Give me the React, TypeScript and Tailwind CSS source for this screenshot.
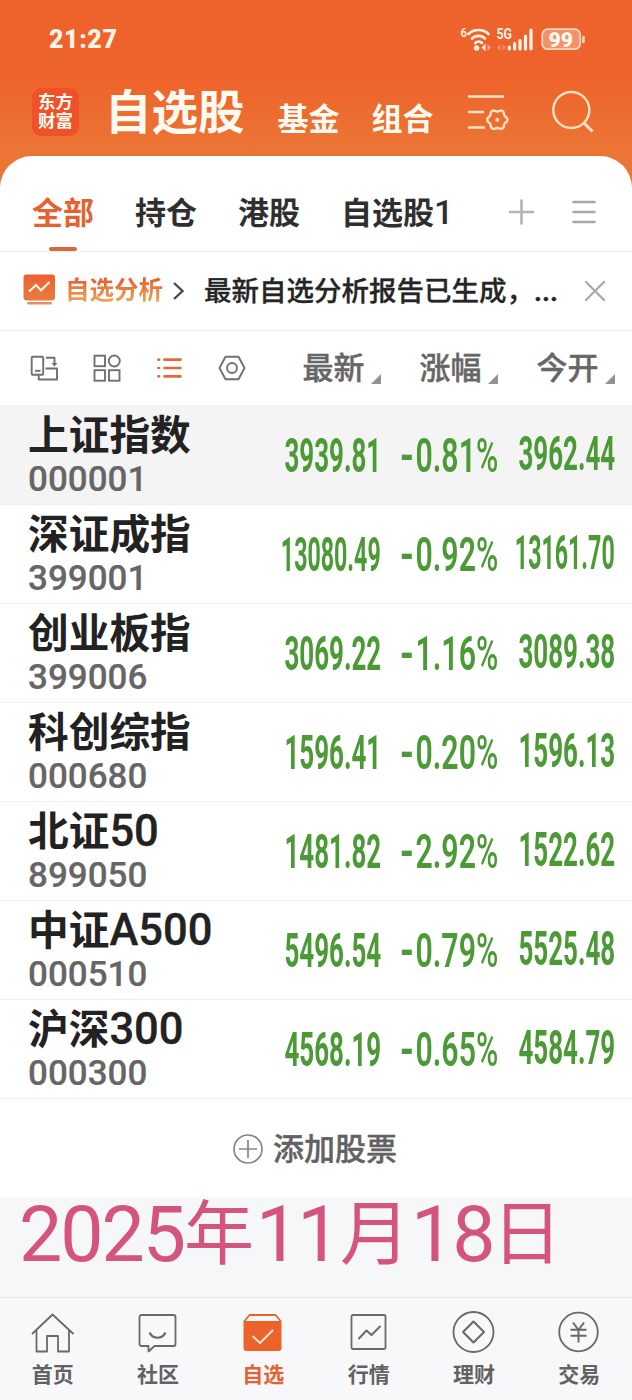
import type { ReactNode } from "react";

type Stock = { name: string; code: string; last: string; change: string; open: string };

const stocks: Stock[] = [
  { name: "上证指数", code: "000001", last: "3939.81", change: "-0.81%", open: "3962.44" },
  { name: "深证成指", code: "399001", last: "13080.49", change: "-0.92%", open: "13161.70" },
  { name: "创业板指", code: "399006", last: "3069.22", change: "-1.16%", open: "3089.38" },
  { name: "科创综指", code: "000680", last: "1596.41", change: "-0.20%", open: "1596.13" },
  { name: "北证50", code: "899050", last: "1481.82", change: "-2.92%", open: "1522.62" },
  { name: "中证A500", code: "000510", last: "5496.54", change: "-0.79%", open: "5525.48" },
  { name: "沪深300", code: "000300", last: "4568.19", change: "-0.65%", open: "4584.79" },
];

// Six-lobed gear outline, sampled every five degrees.
const gearPath =
  Array.from({ length: 72 }, (_, i) => {
    const angle = (i * Math.PI) / 36;
    const radius = 9.2 + 1.0 * Math.cos(6 * angle);
    const x = 497.3 + radius * Math.cos(angle);
    const y = 119.7 + radius * Math.sin(angle);
    return `${i === 0 ? "M" : "L"}${x.toFixed(2)} ${y.toFixed(2)}`;
  }).join("") + "Z";

function StatusBar() {
  return (
    <div className="flex h-[78px] items-center justify-between pl-[49px] pr-[46px] text-[#fff3e6]">
      <span className="mt-[2px] text-[25px] font-black leading-[30px] tracking-[0.600px]">21:27</span>
      <svg width="126" height="30" viewBox="460 24 126 30" fill="none">
        <text x="460.500" y="37" fontSize="12" fontWeight="600" fill="#fff3e6" textLength="6.500" lengthAdjust="spacingAndGlyphs">6</text>
        <g stroke="#fff3e6" strokeWidth="2.600" strokeLinecap="round">
          <path d="M468.500 34C473.500 28.600 483.500 28.600 488.500 34" />
          <path d="M472 38.600C475.500 35 481.500 35 485 38.600" />
          <path d="M475.300 43C477.300 41 480 41 482 43" />
        </g>
        <circle cx="476.600" cy="48" r="2.700" fill="#fff3e6" />
        <path d="M481.500 47.500l4-3.800v7.600z" fill="#fff3e6" />
        <path d="M491 47.500l-3.500-3.500v7z" fill="#f9a98a" />
        <text x="496.500" y="38.800" fontSize="14" fontWeight="700" fill="#fff3e6" textLength="15.500" lengthAdjust="spacingAndGlyphs">5G</text>
        <path d="M497 47.500l3.500-3.500v7zM506 47.500l-3.500-3.500v7z" fill="#f58c66" />
        <g stroke="#fff3e6" strokeWidth="3.200" strokeLinecap="round">
          <path d="M509.300 49v-1.800M514.600 49v-5.500M520 49v-8.500M525.500 49v-13M531 49V30" />
        </g>
        <rect x="542.200" y="29.200" width="38" height="20" rx="5.500" fill="#f39168" stroke="#fcd6c0" strokeWidth="1.800" />
        <path d="M583.500 37v5" stroke="#fcd6c0" strokeWidth="2.600" strokeLinecap="round" />
        <text x="548.500" y="46.500" fontSize="20.500" fontWeight="900" fill="#fff8ee" textLength="24.500" lengthAdjust="spacingAndGlyphs">99</text>
      </svg>
    </div>
  );
}

function Header() {
  return (
    <header className="flex h-[78px] items-start pl-[32px] text-[#fffaf0]">
      <div className="mt-[10px] flex h-[48px] w-[47px] flex-col items-center justify-center rounded-[9px] bg-[#ef5129] text-[17.500px] font-bold leading-[19.500px]">
        <span>东方</span>
        <span>财富</span>
      </div>
      <h1 className="ml-[26px] mt-[3px] text-[46.500px] font-bold leading-[64px]">自选股</h1>
      <span className="ml-[33px] mt-[21px] text-[31px] font-bold leading-[42px]">基金</span>
      <span className="ml-[32px] mt-[21px] text-[31px] font-bold leading-[42px]">组合</span>
      <svg className="ml-[33px] mt-[14px]" width="44" height="42" viewBox="467 92 44 42" fill="none" stroke="#ffe3c8" strokeWidth="2.600">
        <path d="M468 96.500h36M468 112h16M468 127.500h17" />
        <path d={gearPath} strokeWidth="2.400" strokeLinejoin="round" />
        <circle cx="497.300" cy="119.700" r="2" fill="#ffe3c8" stroke="none" />
      </svg>
      <svg className="ml-[39px] mt-[11px]" width="46" height="46" viewBox="550 89 46 46" fill="none" stroke="#ffe3c8" strokeWidth="2.400">
        <circle cx="571.300" cy="110" r="18" />
        <path d="M584 123l8.500 8.500" strokeWidth="2.800" />
      </svg>
    </header>
  );
}

function GroupTabs() {
  return (
    <div className="flex h-[96px] items-start border-b border-[#ededed] pl-[32px] text-[31px] font-bold leading-[40px] text-[#2f2f2f]">
      <div className="mt-[38px] flex flex-col items-center text-[#e3622f]">
        <span>全部</span>
        <span className="mt-[13px] h-[4px] w-[28px] rounded-full bg-[#d7683d]" />
      </div>
      <span className="ml-[41px] mt-[38px]">持仓</span>
      <span className="ml-[41px] mt-[38px]">港股</span>
      <span className="ml-[41px] mt-[38px] w-[112px] whitespace-nowrap">自选股<span className="text-[34px] font-medium leading-[34px]">1</span></span>
      <svg className="ml-[54px] mt-[42px]" width="28" height="28" viewBox="0 0 28 28" stroke="#b4b4b4" strokeWidth="2.600" strokeLinecap="round">
        <path d="M3 14h23M14.500 2.500v23" />
      </svg>
      <svg className="ml-[36px] mt-[42px]" width="26" height="28" viewBox="0 0 26 28" stroke="#a8a8a8" strokeWidth="2.600" strokeLinecap="round">
        <path d="M2.500 4h21M2.500 14h21M2.500 24h21" />
      </svg>
    </div>
  );
}

function Notice() {
  return (
    <div className="flex h-[79px] items-center border-b border-[#ededed] pl-[23px]">
      <svg className="-mt-[3px]" width="33" height="32" viewBox="0 0 33 32" fill="none">
        <defs>
          <linearGradient id="monitor" x1="0" y1="0" x2="0" y2="1">
            <stop stopColor="#ee6030" />
            <stop offset="1" stopColor="#e97b42" />
          </linearGradient>
        </defs>
        <rect x="0.500" y="0.500" width="31.500" height="26" rx="3" fill="url(#monitor)" />
        <path d="M6 17.500l7-6.500 5 5.500L26.500 8" stroke="#fff3e8" strokeWidth="2.200" />
        <path d="M5.500 29.300h22" stroke="#e88d5e" strokeWidth="2.600" strokeLinecap="round" />
      </svg>
      <span className="-mt-px ml-[9px] bg-gradient-to-b from-[#e9652f] from-25% to-[#eba45a] to-80% bg-clip-text text-[24.500px] font-bold leading-[36px] text-transparent">自选分析</span>
      <svg className="ml-[9px]" width="14" height="20" viewBox="0 0 14 20" fill="none" stroke="#4a4a4a" strokeWidth="2.400">
        <path d="M2 2l8.500 8L2 18" />
      </svg>
      <span className="ml-[18px] mt-[2px] flex w-[356px] whitespace-nowrap text-[27.500px] font-medium leading-[40px] text-[#252525] [-webkit-text-stroke:0.300px_#252525]">
        最新自选分析报告已生成，<span className="font-bold">...</span>
      </span>
      <svg className="ml-[24px]" width="22" height="22" viewBox="0 0 22 22" stroke="#aaaaaa" strokeWidth="2.400" strokeLinecap="round">
        <path d="M2 2l18 18M20 2L2 20" />
      </svg>
    </div>
  );
}

function ColumnTitle({ children }: { children: ReactNode }) {
  return (
    <div className="flex w-[117px] items-end justify-end text-[31px] font-medium leading-[40px] text-[#666]">
      <span className="translate-y-px [-webkit-text-stroke:0.400px_#666]">{children}</span>
      <svg className="mb-[4px] ml-[6.500px]" width="10" height="10" viewBox="0 0 10 10">
        <path d="M10 0v10H0z" fill="#929292" />
      </svg>
    </div>
  );
}

function TableHead() {
  return (
    <div className="flex h-[74px] items-center">
      <svg width="264" height="40" viewBox="0 348 264 40" fill="none" stroke="#707070" strokeWidth="1.900">
        <rect x="31.700" y="356.700" width="11.500" height="18" rx="1" />
        <path d="M35 370.800h5.500" />
        <path d="M46 357.700h8.500v6M45.500 368.500H57v11H38.700v-4" strokeLinejoin="round" />
        <path d="M51.500 363h6l-3 3.500z" fill="#707070" stroke="none" />
        <rect x="94.500" y="355.700" width="10.500" height="10.500" />
        <circle cx="114.300" cy="361" r="5.500" />
        <rect x="94.500" y="370.200" width="10.500" height="10.500" />
        <rect x="109" y="370.200" width="10.500" height="10.500" />
        <g stroke="#df6a3c" strokeWidth="2.700" strokeLinecap="round">
          <path d="M158.500 359.700h.5M158.500 368h.5M158.500 376.300h.5M164.500 359.700h16M164.500 368h16M164.500 376.300h16" />
        </g>
        <path d="M225.500 356.700h13l6 11.300-6 11.300h-13l-6-11.300z" strokeLinejoin="round" />
        <circle cx="232" cy="368" r="5" />
      </svg>
      <ColumnTitle>最新</ColumnTitle>
      <ColumnTitle>涨幅</ColumnTitle>
      <ColumnTitle>今开</ColumnTitle>
    </div>
  );
}

function Price({ value }: { value: string }) {
  return (
    <span
      className={
        value.length > 7
          ? "shrink-0 origin-right scale-x-[0.483] whitespace-nowrap text-[48px] font-bold leading-[50px]"
          : "shrink-0 origin-right scale-x-[0.540] whitespace-nowrap text-[48px] font-bold leading-[50px]"
      }
    >
      {value}
    </span>
  );
}

function Change({ value }: { value: string }) {
  return (
    <span className="shrink-0 origin-right scale-x-[0.630] whitespace-nowrap text-[48px] font-semibold leading-[50px]">
      <span className="inline-block origin-right scale-x-[1.200] pr-[2px] font-bold">{value.slice(0, 1)}</span>
      {value.slice(1, -1)}
      <span className="font-medium">{value.slice(-1)}</span>
    </span>
  );
}

function StockRow({ stock, active }: { stock: Stock; active: boolean }) {
  return (
    <div className={active ? "flex h-[100px] border-b border-[#f0f0f0] bg-[#f4f4f4] pl-[28px] pt-px" : "flex h-[99px] border-b border-[#f0f0f0] pl-[28px]"}>
      <div className="flex w-[236px] flex-col whitespace-nowrap pt-[4px]">
        <span className="flex h-[52px] items-baseline text-[40.700px] font-bold leading-[52px] text-[#222]">
          {stock.name.replace(/[A-Z0-9]+$/, "")}
          <span className="text-[43.500px] font-medium leading-[48px] [-webkit-text-stroke:0.300px_#222]">{stock.name.replace(/^[^A-Z0-9]+/, "")}</span>
        </span>
        <span className="mt-px text-[35px] font-medium leading-[34px] text-[#666] [-webkit-text-stroke:0.200px_#666]">{stock.code}</span>
      </div>
      <div className="flex w-[117px] justify-end pt-[25px] text-[#4b9a36]">
        <Price value={stock.last} />
      </div>
      <div className="flex w-[117px] justify-end pt-[25px] text-[#4b9a36]">
        <Change value={stock.change} />
      </div>
      <div className="flex w-[117px] justify-end pt-[23px] text-[#4b9a36]">
        <Price value={stock.open} />
      </div>
    </div>
  );
}

function AddStock() {
  return (
    <div className="flex h-[99px] items-center justify-center pr-[2px]">
      <svg width="30" height="30" viewBox="0 0 30 30" fill="none" stroke="#858585" strokeWidth="1.700">
        <circle cx="15" cy="15" r="14" />
        <path d="M6 15h18M15 6v18" />
      </svg>
      <span className="ml-[10px] mt-[3px] text-[31px] font-medium leading-[40px] text-[#626262] [-webkit-text-stroke:0.400px_#626262]">添加股票</span>
    </div>
  );
}

function DateBanner() {
  return (
    <div className="flex h-[99px] items-start whitespace-nowrap bg-[#f6f7f9] pl-[19px] text-[77px] leading-[75px] text-[#d5547b]">
      <span className="w-[165px] tracking-[-2px]">2025</span>
      <span className="w-[72px] text-[70px] leading-[74px]">年</span>
      <span className="w-[84px] tracking-[-2px]">11</span>
      <span className="w-[71px] text-[70px] leading-[74px]">月</span>
      <span className="w-[81px] tracking-[-2px]">18</span>
      <span className="text-[70px] leading-[74px]">日</span>
    </div>
  );
}

function NavItem({ label, active, children }: { label: string; active?: boolean; children: ReactNode }) {
  return (
    <div className={active ? "flex flex-1 flex-col items-center text-[#e2632f]" : "flex flex-1 flex-col items-center text-[#626262]"}>
      <svg className="mt-[12px]" width="44" height="44" viewBox="0.500 0 44 44" fill="none" stroke={active ? "#ec622b" : "#696969"} strokeWidth="1.800" strokeLinejoin="round">
        {children}
      </svg>
      <span className="mt-[5px] text-[21px] font-bold leading-[32px]">{label}</span>
    </div>
  );
}

function BottomNav() {
  return (
    <nav className="flex h-[103px] border-t border-[#e9e9eb] bg-[#f8f8fa]">
      <NavItem label="首页">
        <path d="M1.500 24L22 4.500 43 24M6 20.500V41.500H16.500V26H27.500V41.500H38.500V20.500" />
      </NavItem>
      <NavItem label="社区">
        <path d="M6 5h32a2 2 0 0 1 2 2v27a2 2 0 0 1-2 2H19l-6 5.500V36H6a2 2 0 0 1-2-2V7a2 2 0 0 1 2-2z" />
        <path d="M14 22.500C17.500 29.500 26.500 29.500 30 22.500" strokeWidth="2.200" />
      </NavItem>
      <NavItem label="自选" active>
        <path d="M3.500 11.500L9 5h26l5.500 6.500" />
        <path d="M3 11h38v27a3 3 0 0 1-3 3H6a3 3 0 0 1-3-3z" fill="#ec622b" stroke="none" />
        <path d="M12 26l7.500 7L32.500 20" stroke="#ffe2d0" strokeWidth="2" />
      </NavItem>
      <NavItem label="行情">
        <rect x="5" y="5" width="34" height="34" rx="1.500" />
        <path d="M12 29l8-8.500 5 4.500 9-9" strokeWidth="2" />
      </NavItem>
      <NavItem label="理财">
        <circle cx="22" cy="22" r="20" />
        <path d="M22 11.500L32.500 22 22 32.500 11.500 22z" strokeWidth="2" />
      </NavItem>
      <NavItem label="交易">
        <circle cx="22" cy="22" r="19.300" />
        <path d="M16.500 12.500l5.500 7.500 5.500-7.500M22 20V32.500M14 19.800h16M14 25.800h16" strokeWidth="2" />
      </NavItem>
    </nav>
  );
}

export default function App() {
  return (
    <div lang="zh-CN" className="flex h-[1400px] w-[632px] flex-col overflow-hidden bg-white font-['Roboto','Noto_Sans_CJK_SC',sans-serif]">
      <div className="bg-[linear-gradient(180deg,#ee622b_0px,#ee632b_78px,#eb7534_148px,#eb7534_188px)]">
        <StatusBar />
        <Header />
        <div className="rounded-t-[32px] bg-white">
          <GroupTabs />
        </div>
      </div>
      <Notice />
      <TableHead />
      {stocks.map((stock, index) => (
        <StockRow key={stock.code} stock={stock} active={index === 0} />
      ))}
      <AddStock />
      <DateBanner />
      <BottomNav />
    </div>
  );
}
